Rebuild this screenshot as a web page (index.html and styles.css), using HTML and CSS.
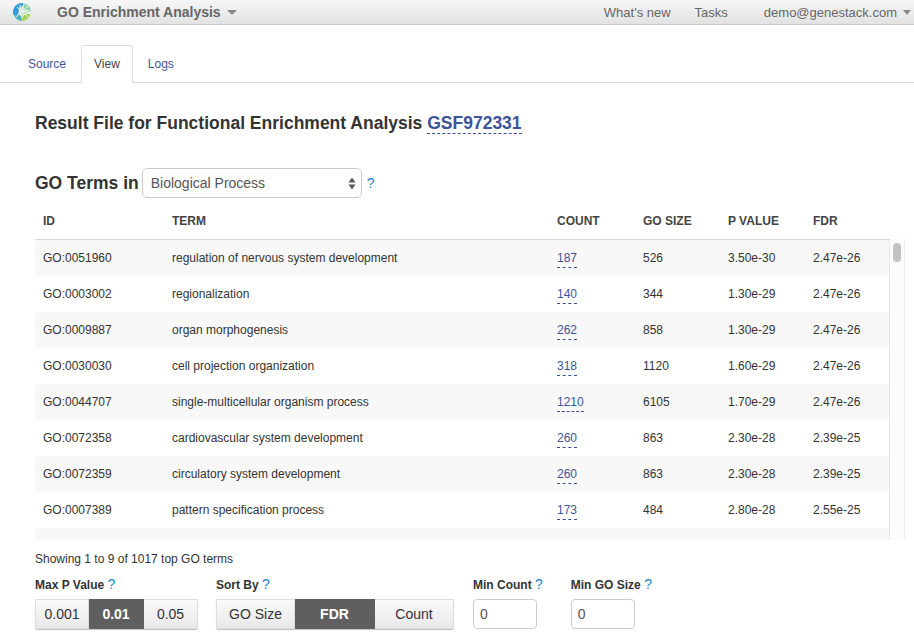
FILE: index.html
```html
<!DOCTYPE html>
<html>
	<head>
		<title>GO Enrichment Analysis</title>
		<meta charset="utf-8">
		<link rel="stylesheet" href="styles.css">
	</head>
	<body>
		<header class="topbar">
			<svg class="logo" width="20" height="20" viewBox="0 0 20 20">
				<circle cx="10" cy="10" r="9" fill="#d8ecd8"/>
				<path d="M10 1a9 9 0 0 0-8.500 12l4.500 1 1-7 4-4V1z" fill="#3a9ad9"/>
				<path d="M2 13a9 9 0 0 0 7 6l1-4-4-3z" fill="#4ab0c8"/>
				<path d="M9 19a9 9 0 0 0 9.500-7l-6-1-3 4z" fill="#a6d45a"/>
				<path d="M12 1.500a9 9 0 0 1 6.800 7.500l-5 .5-2-3z" fill="#8cd0b0"/>
				<path d="M4 15l4-4V3M8 8L5 5M8 11l5-4 3-3M9 16l4-4 6-1M13 12l3 3M11 9l6-1" fill="none" stroke="#eef6f4" stroke-width="1"/>
			</svg>
			<span class="app-name">GO Enrichment Analysis</span>
			<span class="caret caret-big"></span>
			<nav class="topnav">
				<a>What's new</a>
				<a>Tasks</a>
				<a class="user">demo@genestack.com</a>
				<span class="caret"></span>
			</nav>
		</header>

		<div class="tabs">
			<a class="tab">Source</a>
			<a class="tab active">View</a>
			<a class="tab">Logs</a>
		</div>

		<main class="content">
			<h1>Result File for Functional Enrichment Analysis <a class="dashed">GSF972331</a></h1>

			<div class="terms-title">
				<h2>GO Terms in</h2>
				<div class="select">
					<span>Biological Process</span>
					<svg width="8" height="13" viewBox="0 0 8 13">
						<path d="M4 0.500L7.500 5.500H0.500zM4 12.500L0.500 7.500H7.500z" fill="#555"/>
					</svg>
				</div>
				<a class="help">?</a>
			</div>

			<table class="head-table">
				<colgroup>
					<col class="col-id"><col class="col-term"><col class="col-count"><col class="col-size"><col class="col-p"><col class="col-fdr">
				</colgroup>
				<tr>
					<th>ID</th>
					<th>TERM</th>
					<th>COUNT</th>
					<th>GO SIZE</th>
					<th>P VALUE</th>
					<th>FDR</th>
				</tr>
			</table>

			<div class="table-wrap">
				<div class="table-body">
					<table>
						<colgroup>
							<col class="col-id"><col class="col-term"><col class="col-count"><col class="col-size"><col class="col-p"><col class="col-fdr">
						</colgroup>
						<tr><td>GO:0051960</td><td>regulation of nervous system development</td><td><a class="dashed">187</a></td><td>526</td><td>3.50e-30</td><td>2.47e-26</td></tr>
						<tr><td>GO:0003002</td><td>regionalization</td><td><a class="dashed">140</a></td><td>344</td><td>1.30e-29</td><td>2.47e-26</td></tr>
						<tr><td>GO:0009887</td><td>organ morphogenesis</td><td><a class="dashed">262</a></td><td>858</td><td>1.30e-29</td><td>2.47e-26</td></tr>
						<tr><td>GO:0030030</td><td>cell projection organization</td><td><a class="dashed">318</a></td><td>1120</td><td>1.60e-29</td><td>2.47e-26</td></tr>
						<tr><td>GO:0044707</td><td>single-multicellular organism process</td><td><a class="dashed">1210</a></td><td>6105</td><td>1.70e-29</td><td>2.47e-26</td></tr>
						<tr><td>GO:0072358</td><td>cardiovascular system development</td><td><a class="dashed">260</a></td><td>863</td><td>2.30e-28</td><td>2.39e-25</td></tr>
						<tr><td>GO:0072359</td><td>circulatory system development</td><td><a class="dashed">260</a></td><td>863</td><td>2.30e-28</td><td>2.39e-25</td></tr>
						<tr><td>GO:0007389</td><td>pattern specification process</td><td><a class="dashed">173</a></td><td>484</td><td>2.80e-28</td><td>2.55e-25</td></tr>
						<tr><td></td><td></td><td></td><td></td><td></td><td></td></tr>
					</table>
				</div>
				<div class="scrollbar"><div class="thumb"></div></div>
			</div>

			<p class="showing">Showing 1 to 9 of 1017 top GO terms</p>

			<div class="filters">
				<div class="filter filter-p">
					<label>Max P Value <a class="help">?</a></label>
					<div class="btn-group">
						<button>0.001</button>
						<button class="on">0.01</button>
						<button>0.05</button>
					</div>
				</div>
				<div class="filter filter-sort">
					<label>Sort By <a class="help">?</a></label>
					<div class="btn-group">
						<button>GO Size</button>
						<button class="on">FDR</button>
						<button>Count</button>
					</div>
				</div>
				<div class="filter filter-count">
					<label>Min Count <a class="help">?</a></label>
					<input type="text" value="0">
				</div>
				<div class="filter">
					<label>Min GO Size <a class="help">?</a></label>
					<input type="text" value="0">
				</div>
			</div>
		</main>
	</body>
</html>
```

FILE: styles.css
```css
html, body {
	height: 641px;
	overflow: hidden;
}

body {
	margin: 0;
	background: #fff;
	color: #333;
	font-family: "Liberation Sans", Arial, sans-serif;
	font-size: 12px;
}

a {
	color: #3b5598;
}

.topbar {
	display: flex;
	align-items: center;
	height: 24px;
	padding-left: 12px;
	background: linear-gradient(#f6f6f6, #e2e2e2);
	border-bottom: 1px solid #c8c8c8;
	color: #666;
}

.logo {
	flex: none;
}

.app-name {
	margin-left: 25px;
	font-size: 14px;
	font-weight: bold;
}

.caret {
	width: 0;
	height: 0;
	margin-left: 6px;
	border-left: 4px solid transparent;
	border-right: 4px solid transparent;
	border-top: 5px solid #888;
}

.caret-big {
	border-left-width: 5px;
	border-right-width: 5px;
}

.topnav {
	display: flex;
	align-items: center;
	margin-left: auto;
	padding-right: 3px;
	font-size: 13px;
}

.topnav a {
	color: #666;
	margin-left: 24px;
}

.topnav .user {
	margin-left: 36px;
}

.tabs {
	display: flex;
	gap: 2px;
	height: 37px;
	margin-top: 20px;
	padding-left: 15px;
	border-bottom: 1px solid #ddd;
}

.tab {
	height: 37px;
	padding: 0 13px;
	line-height: 38px;
	color: #3b5598;
	box-sizing: border-box;
}

.tab.active {
	height: 38px;
	padding: 0 12px;
	color: #444;
	background: #fff;
	border: 1px solid #ddd;
	border-bottom: none;
	border-radius: 2px 2px 0 0;
	line-height: 36px;
}

.content {
	padding: 0 9px 0 35px;
}

h1 {
	margin: 27px 0 0;
	font-size: 17.5px;
	line-height: 26px;
}

.dashed {
	text-decoration: none;
	border-bottom: 1px dashed #3b4f8c;
	padding-bottom: 2px;
}

h1 .dashed {
	padding-bottom: 0;
}

.terms-title {
	display: flex;
	align-items: center;
	height: 30px;
	margin-top: 32px;
}

h2 {
	margin: 0;
	font-size: 17.5px;
}

.select {
	display: flex;
	align-items: center;
	justify-content: space-between;
	box-sizing: border-box;
	width: 220px;
	height: 30px;
	margin-left: 3px;
	padding: 0 5px 0 8px;
	border: 1px solid #ccc;
	border-radius: 5px;
	font-size: 14px;
	color: #555;
}

.help {
	color: #1a87cc;
	font-weight: normal;
	font-size: 14px;
}

.terms-title .help {
	margin-left: 5px;
}

table {
	width: 855px;
	table-layout: fixed;
	border-collapse: collapse;
}

.col-id {
	width: 129px;
}

.col-term {
	width: 385px;
}

.col-count {
	width: 86px;
}

.col-size,
.col-p,
.col-fdr {
	width: 85px;
}

.head-table {
	margin-top: 8px;
}

th {
	height: 30px;
	padding: 0 8px;
	text-align: left;
	color: #444;
}

td {
	height: 36px;
	padding: 0 8px;
	box-sizing: border-box;
	white-space: nowrap;
}

tr:nth-child(odd) td {
	background: #f8f8f8;
}

.table-wrap {
	display: flex;
	height: 301px;
	margin-top: 3px;
}

.table-body {
	width: 856px;
	height: 301px;
	overflow: hidden;
	box-sizing: border-box;
	border-top: 1px solid #d8d8d8;
	border-right: 1px solid #e4e4e4;
}

.scrollbar {
	box-sizing: border-box;
	width: 15px;
	border-right: 1px solid #eee;
	background: #fcfcfc;
	padding: 4px 3px 0 3px;
}

.thumb {
	height: 19px;
	border-radius: 4px;
	background: #c2c2c2;
}

.showing {
	margin: 12px 0 0;
	line-height: 14px;
}

.filters {
	display: flex;
	margin-top: 11px;
}

.filter label {
	display: block;
	font-weight: bold;
	line-height: 14px;
	margin-bottom: 7px;
}

.filter-p {
	margin-right: 18px;
}

.filter-sort {
	margin-right: 19px;
}

.filter-count {
	margin-right: 28px;
}

.btn-group {
	display: flex;
	height: 30px;
	border-radius: 2px;
	box-shadow: 0 0 0 1px rgba(0, 0, 0, 0.08) inset, 0 1px 1px rgba(0, 0, 0, 0.25);
}

.btn-group button {
	width: 54px;
	height: 30px;
	padding: 0;
	border: 1px solid #ddd;
	border-left: none;
	background: linear-gradient(#fafafa, #e8e8e8);
	color: #333;
	font-family: inherit;
	font-size: 14px;
}

.btn-group button:first-child {
	border-left: 1px solid #ddd;
}

.btn-group button.on {
	width: 55px;
	border-color: #5f5f5f;
	background: #5f5f5f;
	color: #fff;
	font-weight: bold;
}

.filter-sort .btn-group button {
	width: 79px;
}

.filter-sort .btn-group button.on {
	width: 80px;
}

input {
	display: block;
	box-sizing: border-box;
	width: 64px;
	height: 30px;
	padding: 0 6px;
	border: 1px solid #ccc;
	border-radius: 4px;
	color: #555;
	font-family: inherit;
	font-size: 14px;
}
```
